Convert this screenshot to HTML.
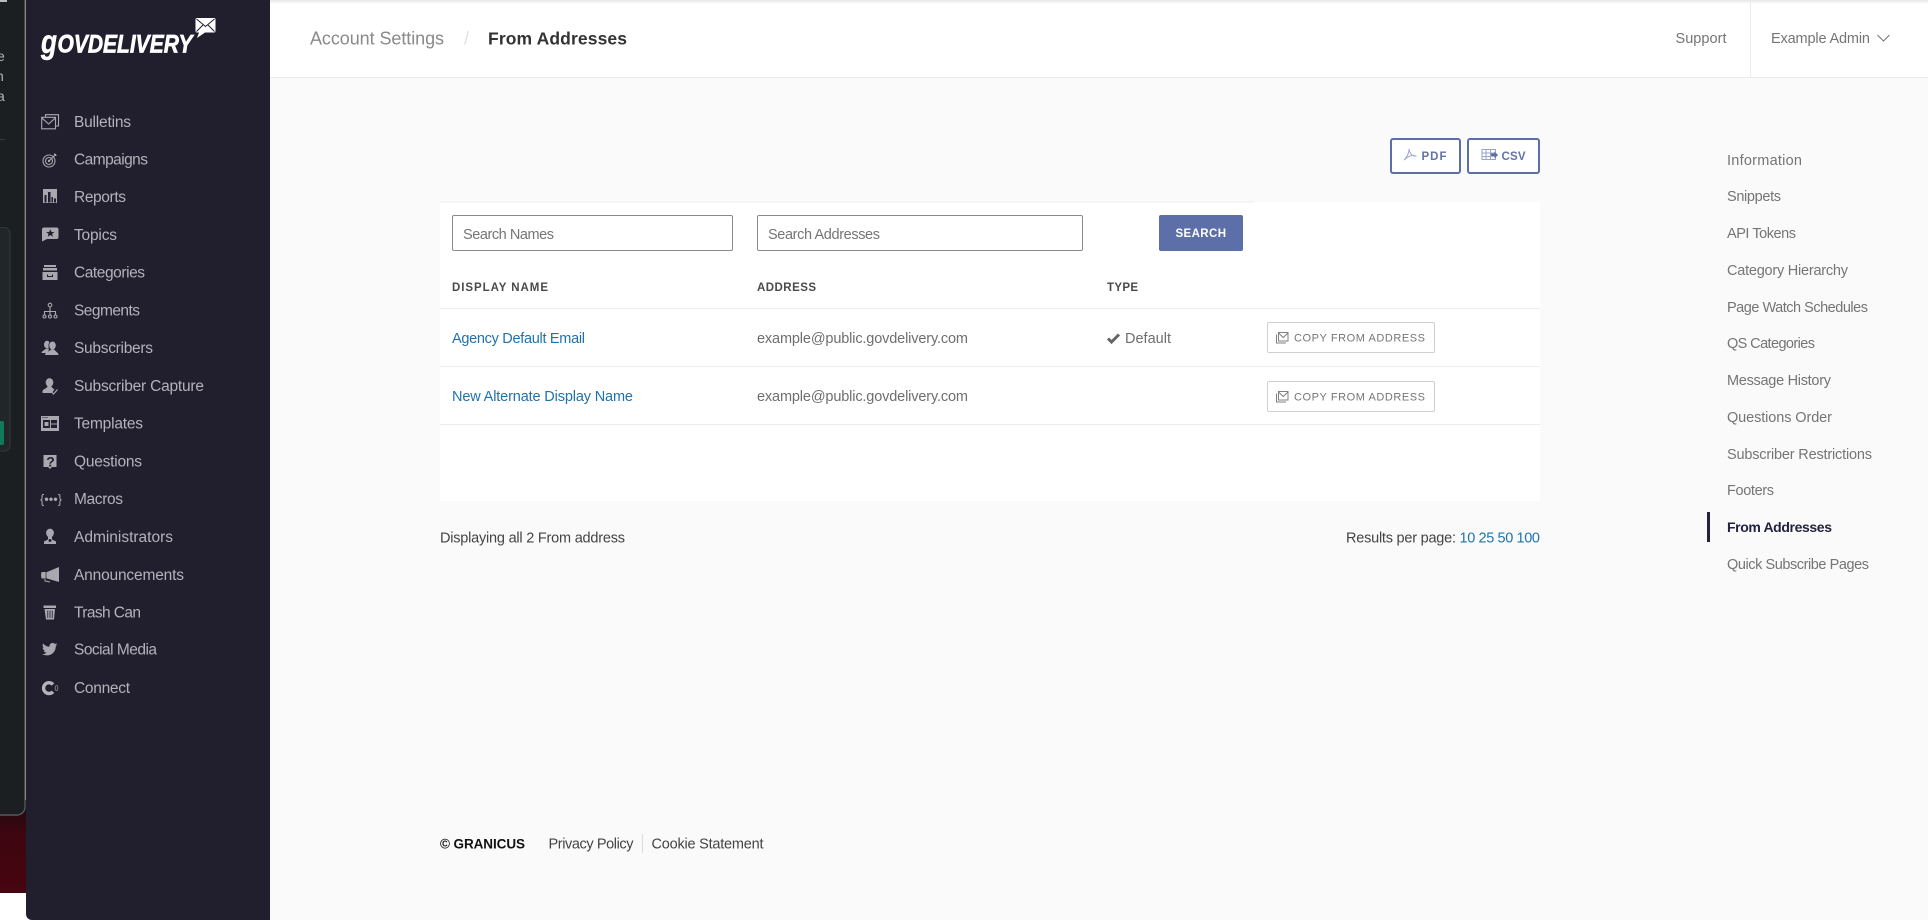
<!DOCTYPE html>
<html lang="en">
<head>
<meta charset="utf-8">
<title>From Addresses</title>
<style>
html,body{margin:0;padding:0;width:1928px;height:920px;overflow:hidden;background:#fafafa}
svg{display:block}
text{font-family:"Liberation Sans",sans-serif;white-space:pre}
.nav{font-size:15.5px;fill:#b4b2bb}
.ic{fill:#a9a7af}
.ics{fill:none;stroke:#a9a7af;stroke-width:1.1}
.rn{font-size:14.5px;fill:#757575}
.b{font-size:14.5px;fill:#6e6e6e}
.l{font-size:14.5px;fill:#1f72ad}
.h{font-size:11.5px;font-weight:bold;fill:#4a4a4a}
.c{font-size:11px;fill:#757575}
.d{font-size:14.5px;fill:#444}
</style>
</head>
<body>
<svg width="1928" height="920" viewBox="0 0 1928 920" xmlns="http://www.w3.org/2000/svg">
<defs>
<linearGradient id="top" x1="0" y1="0" x2="0" y2="1"><stop offset="0" stop-color="#e6e6e6"/><stop offset="1" stop-color="#ffffff"/></linearGradient>
<linearGradient id="red" x1="0" y1="0" x2="0" y2="1"><stop offset="0" stop-color="#1a0b0e"/><stop offset=".35" stop-color="#3d0610"/><stop offset="1" stop-color="#470510"/></linearGradient>
</defs>
<rect width="1928" height="920" fill="#fafafa"/>

<!-- left background window -->
<rect x="0" y="893" width="26" height="27" fill="#fff"/>
<rect x="0" y="800" width="26" height="93" fill="url(#red)"/>
<path d="M0 0H25V807a8 8 0 0 1-8 8H0Z" fill="#1c1f21"/>
<path d="M25 0V807a8 8 0 0 1-8 8H0" fill="none" stroke="#55575a" stroke-width="1.4"/>
<rect x="0" y="0" width="7" height="2" fill="#bbb"/>
<text x="-3" y="61" font-size="14" fill="#b5b5b5">e</text>
<text x="-4" y="81" font-size="14" fill="#b5b5b5">n</text>
<text x="-3" y="101" font-size="14" fill="#b5b5b5">a</text>
<rect x="0" y="139" width="5" height="1" fill="#3a3c3e"/>
<path d="M0 227.500H4a6 6 0 0 1 6 6V445a6 6 0 0 1-6 6H0Z" fill="#212628"/>
<path d="M0 227.500H4a6 6 0 0 1 6 6V445a6 6 0 0 1-6 6H0" fill="none" stroke="#35383b"/>
<path d="M0 421H2a2 2 0 0 1 2 2V443a2 2 0 0 1-2 2H0Z" fill="#0f7a5a"/>

<!-- sidebar -->
<path d="M26 0H270V920H32a6 6 0 0 1-6-6Z" fill="#211e2e"/>

<!-- logo -->
<text x="41" y="53" font-size="33" font-weight="bold" font-style="italic" fill="#fff" stroke="#fff" stroke-width=".5" textLength="16" lengthAdjust="spacingAndGlyphs">g</text>
<text x="57.500" y="52.700" font-size="25" font-weight="bold" font-style="italic" fill="#fff" stroke="#fff" stroke-width=".7" textLength="135" lengthAdjust="spacingAndGlyphs">OVDELIVERY</text>
<path d="M197 18H214a1.500 1.500 0 0 1 1.500 1.500V31a1.500 1.500 0 0 1-1.500 1.500H205L197 38L199 32.500H197a1.500 1.500 0 0 1-1.500-1.500V19.500A1.500 1.500 0 0 1 197 18Z" fill="#fff"/>
<path d="M196.500 19L205.500 26.500L214.500 19M196.500 31.500L203 25M214.500 31.500L208 25" fill="none" stroke="#211e2e" stroke-width="1"/>

<!-- nav icons -->
<path class="ics" stroke-width="1.300" d="M45.500 117V114.700H58.500V126H55.500M41.700 117.300H55.500V128.800H41.700ZM41.700 117.800L48.600 124L55.500 117.800"/>
<g class="ics"><circle cx="49" cy="161" r="6"/><circle cx="49" cy="161" r="3.500"/><path d="M49.500 160.500L56 154M54.500 153.500V155.500H56.500"/></g>
<circle class="ic" cx="49" cy="161" r="1.200"/>
<path class="ic" d="M43 189H57V203H43Z"/>
<path d="M44.500 202.500V195H46.500V202.500ZM48 202.500V192H50.500V202.500ZM51.500 202.500V197H53V202.500ZM54 202.500V198.500H56V202.500Z" fill="#211e2e"/>
<path class="ic" d="M44 227.500H56.500a2 2 0 0 1 2 2V237a2 2 0 0 1-2 2H47L42 241.500V229.500a2 2 0 0 1 2-2Z"/>
<path d="M50.300 229.200L51.500 232H54.500L52.100 233.800L53 236.700L50.300 235L47.700 236.700L48.500 233.800L46.100 232H49.100Z" fill="#211e2e"/>
<path class="ic" d="M44 265H56V267H44ZM43 268H57V270.500H43ZM42.500 272H57.500V280H42.500Z"/>
<path d="M47.500 274.500V276.500H52.500V274.500" fill="none" stroke="#211e2e" stroke-width="1"/>
<g class="ics"><circle cx="50" cy="305" r="1.800"/><path d="M50 307V311.500M44.500 315V311.500H55.500V315M50 311.500V315"/><circle cx="44.500" cy="316.500" r="1.500"/><circle cx="50" cy="316.500" r="1.500"/><circle cx="55.500" cy="316.500" r="1.500"/></g>
<!-- subscribers -->
<ellipse class="ic" cx="47" cy="344.500" rx="3" ry="3.800"/>
<path class="ic" d="M41.500 353C41.500 351 45 350 46 348.500H49L48 353Z"/>
<ellipse class="ic" cx="52.500" cy="345.500" rx="3.700" ry="4.400" stroke="#211e2e" stroke-width=".8"/>
<path class="ic" d="M45 355C45 352.500 49.500 351.500 50.800 349.500H54.200C55.500 351.500 58.500 352.500 58.500 355Z"/>
<!-- capture -->
<ellipse class="ic" cx="49.500" cy="382.500" rx="3.800" ry="4.400"/>
<path class="ic" d="M42.500 393V391C42.500 389.500 46.500 388.500 47.500 386.500H51.500C52 388 53.500 388.700 54.500 389.300L52 393Z"/>
<path d="M51 391.500L53.500 394L57.500 389.500" fill="none" stroke="#a9a7af" stroke-width="1.200"/>
<!-- templates -->
<path class="ic" d="M41 416H59V431H41Z"/>
<path d="M43 420H50V428H43ZM51 420H57V423.500H51ZM51 424.500H57V428H51Z" fill="#211e2e"/>
<path d="M44.500 422H48.500V426H44.500Z" fill="#a9a7af"/>
<path d="M42.500 417.500H43.500M44.500 417.500H45.500M46.500 417.500H47.500" stroke="#211e2e" stroke-width="1"/>
<!-- questions -->
<path class="ic" d="M43.500 455H56.500V467H52L50 469L48 467H43.500Z"/>
<text x="46.300" y="466.500" font-size="14" font-weight="bold" fill="#211e2e">?</text>
<text x="40" y="503.500" font-size="13" fill="#a9a7af" textLength="22" lengthAdjust="spacingAndGlyphs">{•••}</text>
<!-- admin -->
<ellipse class="ic" cx="50" cy="533" rx="3.900" ry="4.400"/>
<path class="ic" d="M44 544V541.500L48 539.500V537H52V539.500L56 541.500V544Z"/>
<circle cx="50" cy="540.500" r="1.500" fill="#211e2e"/>
<!-- announcements -->
<path class="ic" d="M59 567V582L47 578.500H41.500L41 575L41.500 572H47Z"/>
<path d="M46 569.700V579.300" stroke="#211e2e" stroke-width=".7"/>
<path d="M45 579V581L50 582" fill="none" stroke="#a9a7af" stroke-width="1"/>
<!-- trash -->
<path class="ic" d="M43.500 605.500H56V608H43.500ZM44.500 609H55L54 619.500H46Z"/>
<path d="M47.800 610.500V618M50 610.500V618M52.200 610.500V618" stroke="#211e2e" stroke-width=".8"/>
<path class="ic" transform="translate(42 641.500) scale(.64)" d="M23.950 4.570a10 10 0 0 1-2.820.780 4.960 4.960 0 0 0 2.160-2.720c-.950.550-2 .950-3.120 1.180a4.920 4.920 0 0 0-8.380 4.480C7.690 8.100 4.070 6.130 1.640 3.160a4.820 4.820 0 0 0-.670 2.480c0 1.710.870 3.210 2.190 4.100a4.900 4.900 0 0 1-2.230-.610v.060c0 2.380 1.700 4.370 3.950 4.820-.410.110-.850.170-1.300.170-.310 0-.620-.030-.920-.08a4.930 4.930 0 0 0 4.600 3.420A9.870 9.870 0 0 1 0 19.540a14 14 0 0 0 7.560 2.210c9.050 0 14-7.500 14-14 0-.210 0-.420-.02-.630A9.940 9.940 0 0 0 24 4.590z"/>
<path d="M53 684.500A5.400 5.400 0 1 0 53 691.700" fill="none" stroke="#b4b2bb" stroke-width="3.400"/>
<ellipse cx="56.500" cy="688" rx="1.300" ry="2.600" fill="none" stroke="#8f8d96" stroke-width=".8"/>

<!-- nav text -->
<text class="nav" x="74" y="127" textLength="57">Bulletins</text>
<text class="nav" x="74" y="164.500" textLength="74">Campaigns</text>
<text class="nav" x="74" y="202" textLength="52">Reports</text>
<text class="nav" x="74" y="240" textLength="43">Topics</text>
<text class="nav" x="74" y="277.500" textLength="71">Categories</text>
<text class="nav" x="74" y="315.500" textLength="66">Segments</text>
<text class="nav" x="74" y="353" textLength="79">Subscribers</text>
<text class="nav" x="74" y="391" textLength="130">Subscriber Capture</text>
<text class="nav" x="74" y="428.500" textLength="69">Templates</text>
<text class="nav" x="74" y="466.500" textLength="68">Questions</text>
<text class="nav" x="74" y="504" textLength="49">Macros</text>
<text class="nav" x="74" y="542" textLength="99">Administrators</text>
<text class="nav" x="74" y="580" textLength="110">Announcements</text>
<text class="nav" x="74" y="617.500" textLength="67">Trash Can</text>
<text class="nav" x="74" y="654.500" textLength="83">Social Media</text>
<text class="nav" x="74" y="693" textLength="56">Connect</text>

<!-- header -->
<rect x="270" y="0" width="1658" height="77" fill="#fff"/>
<rect x="270" y="0" width="1658" height="4" fill="url(#top)"/>
<rect x="270" y="77" width="1658" height="1" fill="#e9e9e9"/>
<text x="310" y="44.500" font-size="18" fill="#8a8a8a" textLength="134">Account Settings</text>
<text x="464" y="44.500" font-size="18" fill="#e2e2e2">/</text>
<text x="488" y="44.500" font-size="17.500" font-weight="bold" fill="#333" textLength="139">From Addresses</text>
<text x="1675.500" y="42.800" font-size="14.500" fill="#757575" textLength="51">Support</text>
<rect x="1750" y="0" width="1" height="77" fill="#ececec"/>
<text x="1771" y="42.800" font-size="14.500" fill="#757575" textLength="99">Example Admin</text>
<path d="M1877.500 35L1883.500 41L1889.500 35" fill="none" stroke="#757575" stroke-width="1"/>

<!-- export buttons -->
<rect x="1391" y="139" width="69" height="34" rx="2" fill="#fff" stroke="#5d6fa8" stroke-width="2"/>
<rect x="1468" y="139" width="71" height="34" rx="2" fill="#fff" stroke="#5d6fa8" stroke-width="2"/>
<path d="M1409 149C1409.500 152 1406 159 1404 160C1407 157 1412 154.500 1415.500 156C1412 156.500 1409.500 153 1409 149Z" fill="none" stroke="#9aa5c8" stroke-width="1"/>
<text x="1421.500" y="160" font-size="11.500" font-weight="bold" fill="#6272ab" textLength="25">PDF</text>
<path d="M1482 149.500H1495.500V159.500H1482ZM1482 153H1495.500M1482 156.500H1490M1486 149.500V159.500M1490.500 149.500V159.500" fill="none" stroke="#9aa5c8" stroke-width="1"/>
<path d="M1491 153.500H1494.500V151.500L1498 155L1494.500 158.500V156.500H1491Z" fill="#5d6fa8"/>
<text x="1501.500" y="160" font-size="11.500" font-weight="bold" fill="#6272ab" textLength="24">CSV</text>

<!-- table -->
<rect x="440" y="202" width="1100" height="299" fill="#fff"/>
<rect x="440" y="201.500" width="814" height="1" fill="#eeeeee"/>
<rect x="452.500" y="215.500" width="280" height="35" rx="1.500" fill="#fff" stroke="#8a8a8a"/>
<text x="463" y="239" font-size="14.500" fill="#757575" textLength="91">Search Names</text>
<rect x="757.500" y="215.500" width="325" height="35" rx="1.500" fill="#fff" stroke="#8a8a8a"/>
<text x="768" y="239" font-size="14.500" fill="#757575" textLength="112">Search Addresses</text>
<rect x="1159" y="215" width="84" height="36" rx="2" fill="#5d6fa8"/>
<text x="1175.500" y="237" font-size="11.500" font-weight="bold" fill="#fff" textLength="50.500">SEARCH</text>

<text class="h" x="452" y="291" textLength="96">DISPLAY NAME</text>
<text class="h" x="757" y="291" textLength="59">ADDRESS</text>
<text class="h" x="1107" y="291" textLength="31">TYPE</text>
<rect x="440" y="308" width="1100" height="1" fill="#ececec"/>
<rect x="440" y="366" width="1100" height="1" fill="#ececec"/>
<rect x="440" y="424" width="1100" height="1" fill="#ececec"/>

<text class="l" x="452" y="343" textLength="133">Agency Default Email</text>
<text class="b" x="757" y="343" textLength="211">example@public.govdelivery.com</text>
<path d="M1108 338.500L1111.500 342L1119 334.500" fill="none" stroke="#666" stroke-width="3"/>
<text class="b" x="1125" y="343" textLength="46">Default</text>
<rect x="1267.500" y="322.500" width="167" height="30" rx="1.500" fill="#fff" stroke="#cfcfcf"/>
<path d="M1276.500 334.500V343H1286M1278.500 332.500H1288V341H1278.500ZM1278.500 333L1283.250 337.500L1288 333" fill="none" stroke="#808080" stroke-width="1"/>
<text class="c" x="1294" y="341.300" textLength="131">COPY FROM ADDRESS</text>

<text class="l" x="452" y="401" textLength="181">New Alternate Display Name</text>
<text class="b" x="757" y="401" textLength="211">example@public.govdelivery.com</text>
<rect x="1267.500" y="381.500" width="167" height="30" rx="1.500" fill="#fff" stroke="#cfcfcf"/>
<path d="M1276.500 393.500V402H1286M1278.500 391.500H1288V400H1278.500ZM1278.500 392L1283.250 396.500L1288 392" fill="none" stroke="#808080" stroke-width="1"/>
<text class="c" x="1294" y="400.300" textLength="131">COPY FROM ADDRESS</text>

<!-- below table -->
<text class="d" x="440" y="542.700" textLength="185">Displaying all 2 From address</text>
<text class="d" x="1346" y="542.700" textLength="110">Results per page:</text>
<text class="l" x="1459.500" y="542.700" textLength="80.500">10 25 50 100</text>

<!-- footer -->
<text x="440" y="848.700" font-size="13.500" font-weight="bold" fill="#111" textLength="85">© GRANICUS</text>
<text class="d" x="548.500" y="848.700" textLength="85">Privacy Policy</text>
<rect x="642" y="834" width="1" height="19" fill="#dcdcdc"/>
<text class="d" x="651.500" y="848.700" textLength="112">Cookie Statement</text>

<!-- right nav -->
<text class="rn" x="1727" y="165" textLength="75">Information</text>
<text class="rn" x="1727" y="201" textLength="54">Snippets</text>
<text class="rn" x="1727" y="238" textLength="69">API Tokens</text>
<text class="rn" x="1727" y="275" textLength="121">Category Hierarchy</text>
<text class="rn" x="1727" y="312" textLength="141">Page Watch Schedules</text>
<text class="rn" x="1727" y="348" textLength="88">QS Categories</text>
<text class="rn" x="1727" y="385" textLength="104">Message History</text>
<text class="rn" x="1727" y="422" textLength="105">Questions Order</text>
<text class="rn" x="1727" y="459" textLength="145">Subscriber Restrictions</text>
<text class="rn" x="1727" y="495" textLength="47">Footers</text>
<rect x="1707" y="512" width="3" height="30" fill="#23233f"/>
<text x="1727" y="532" font-size="14" font-weight="bold" fill="#23233f" textLength="105">From Addresses</text>
<text class="rn" x="1727" y="569" textLength="142">Quick Subscribe Pages</text>
</svg>
</body>
</html>
